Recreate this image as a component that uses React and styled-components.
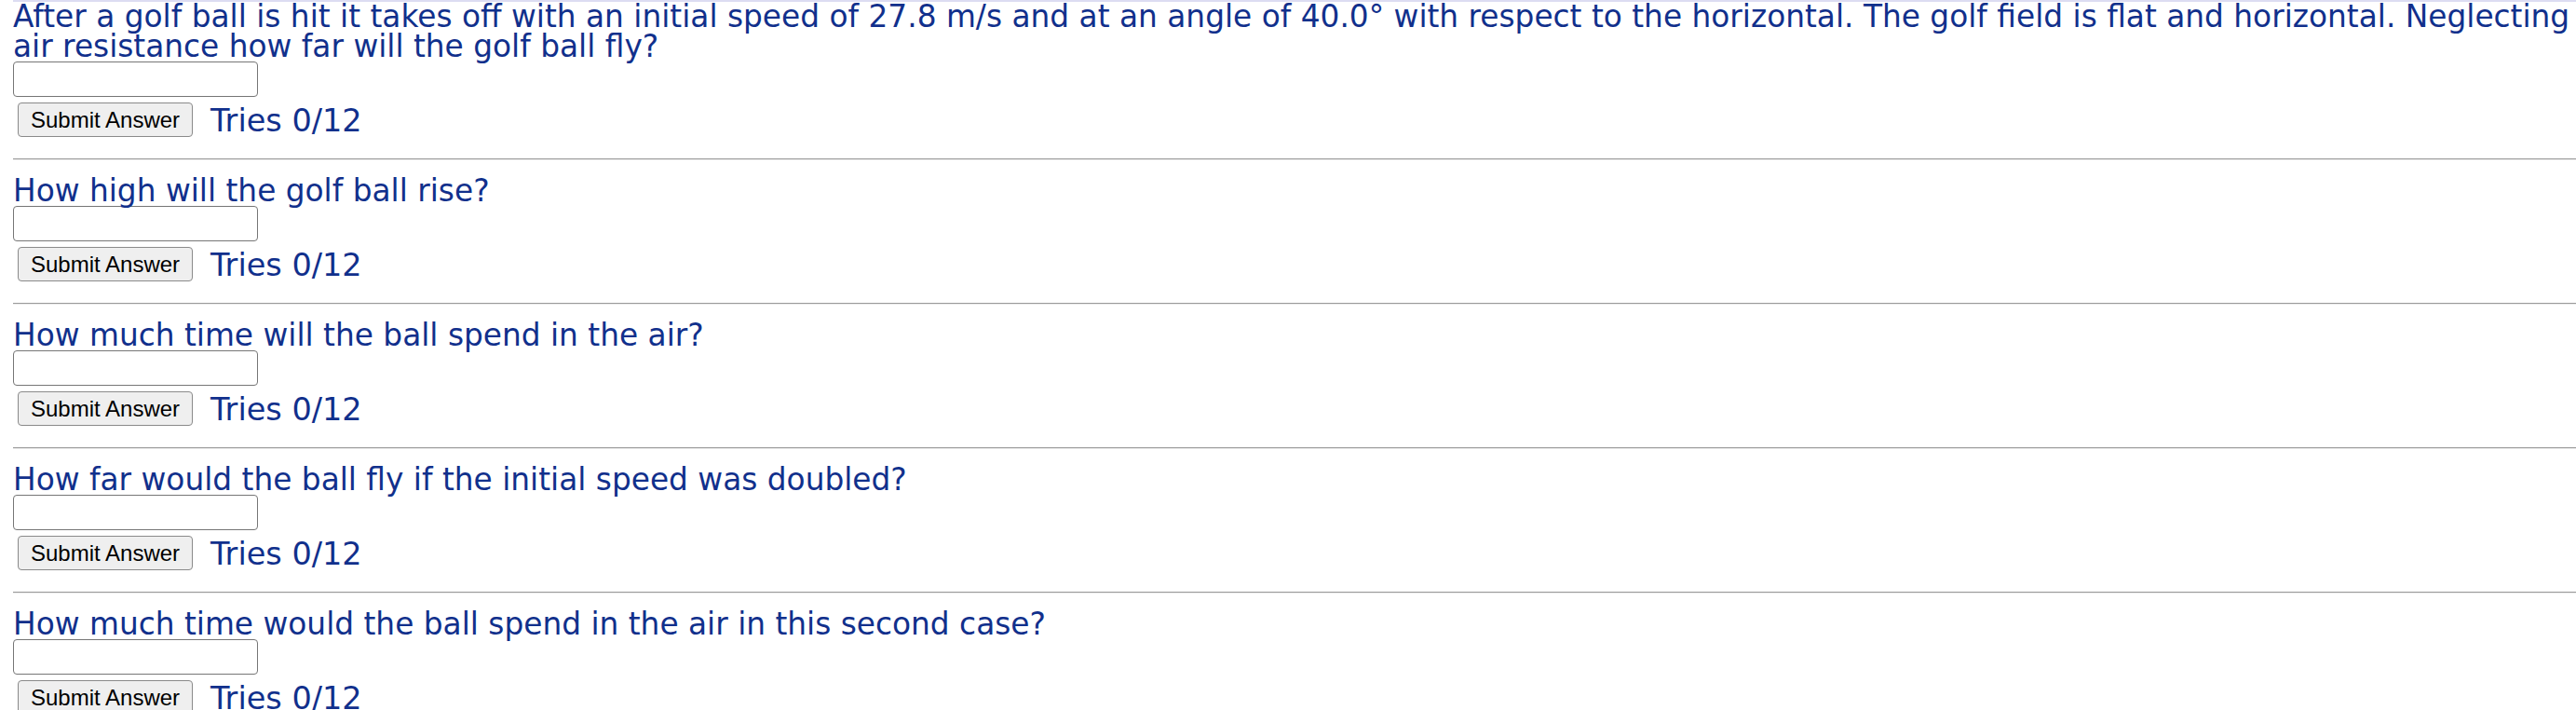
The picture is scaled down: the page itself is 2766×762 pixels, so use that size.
import styled, { createGlobalStyle } from "styled-components";

const questions = [
  "After a golf ball is hit it takes off with an initial speed of 27.8 m/s and at an angle of 40.0° with respect to the horizontal. The golf field is flat and horizontal. Neglecting air resistance how far will the golf ball fly?",
  "How high will the golf ball rise?",
  "How much time will the ball spend in the air?",
  "How far would the ball fly if the initial speed was doubled?",
  "How much time would the ball spend in the air in this second case?",
];

export default function App() {
  return (
    <>
      <GlobalStyle />
      <Page>
        <TopRule />
        {questions.map((q, i) => (
          <Part key={i} $first={i === 0}>
            <Prompt>{q}</Prompt>
            <AnswerInput type="text" />
            <Row>
              <SubmitButton type="button">Submit Answer</SubmitButton>
              <Tries>Tries 0/12</Tries>
            </Row>
            {i < questions.length - 1 && <Divider />}
          </Part>
        ))}
      </Page>
    </>
  );
}

const GlobalStyle = createGlobalStyle`
  body {
    margin: 0;
    background: #fff;
    font-family: "DejaVu Sans", Verdana, sans-serif;
    overflow: hidden;
  }
`;

const Page = styled.div`
  padding-left: 14px;
  box-sizing: border-box;
  color: #11308c;
`;

const TopRule = styled.div`
  height: 2px;
  background: #dcdcf2;
`;

const Part = styled.section`
  padding-top: ${(p) => (p.$first ? "0" : "17px")};
`;

const Prompt = styled.div`
  font-size: 32.8px;
  line-height: 32px;
`;

const AnswerInput = styled.input`
  display: block;
  box-sizing: border-box;
  width: 263px;
  height: 38px;
  margin: 0;
  border: 1px solid #767676;
  border-radius: 4px;
  background: #fff;
`;

const Row = styled.div`
  display: flex;
  align-items: center;
  gap: 19px;
  margin-top: 6px;
  padding-left: 5px;
`;

const SubmitButton = styled.button`
  box-sizing: border-box;
  height: 37px;
  padding: 0 13px;
  margin: 0;
  font-family: "Liberation Sans", Arial, sans-serif;
  font-size: 24px;
  color: #000;
  background: #efefef;
  border: 1px solid #8a8a8a;
  border-radius: 4px;
`;

const Tries = styled.span`
  font-size: 33.5px;
  line-height: 32px;
  padding-top: 3px;
`;

const Divider = styled.div`
  margin-top: 23px;
  height: 0;
  border-top: 1px solid #9a9a9a;
  border-bottom: 1px solid #ececec;
`;
